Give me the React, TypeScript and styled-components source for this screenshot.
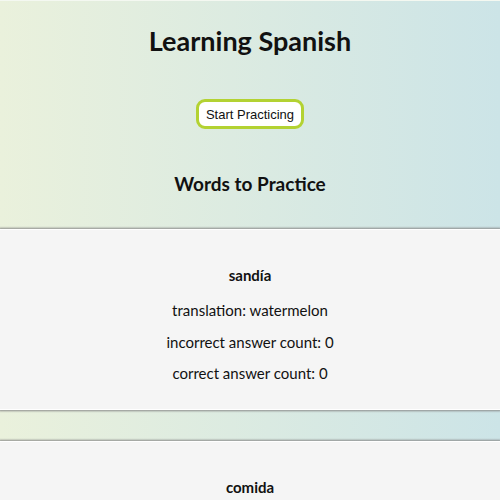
import styled, { createGlobalStyle } from "styled-components";

const GlobalStyle = createGlobalStyle`
  html, body {
    margin: 0;
    padding: 0;
  }
  body {
    font-family: Lato, "Noto Sans", sans-serif;
    color: #111;
    background: linear-gradient(to right, #eaf1dc, #cce4e7);
    background-attachment: fixed;
    min-height: 100vh;
  }
`

const Page = styled.div`
  display: flex;
  flex-direction: column;
  align-items: center;
  padding-top: 1px;
  border-top: 1px solid #f4f8f1;
`

const Title = styled.h1`
  font-size: 27px;
  font-weight: 700;
  line-height: 34px;
  margin: 22px 0 0;
`

const PracticeButton = styled.button`
  margin-top: 41px;
  height: 30px;
  padding: 0 7px;
  font-family: "Liberation Sans", Arial, sans-serif;
  font-size: 13px;
  color: #111;
  background: #fff;
  border: 3px solid #b3d232;
  border-radius: 9px;
  cursor: pointer;
`

const SectionTitle = styled.h2`
  font-size: 19px;
  font-weight: 700;
  line-height: 24px;
  margin: 43px 0 0;
`

const WordList = styled.div`
  display: flex;
  flex-direction: column;
  gap: 31px;
  width: 100%;
  margin-top: 33px;
`

const WordCard = styled.div`
  background: #f5f5f5;
  border-top: 1px solid #fff;
  border-bottom: 1px solid #fff;
  box-shadow: 0 0 2px 1px #8a8a8a;
  padding: 36px 0 13px;
  text-align: center;
`

const Word = styled.h3`
  font-size: 15px;
  font-weight: 700;
  line-height: 18px;
  margin: 0 0 17px;
`

const Detail = styled.p`
  font-size: 15px;
  line-height: 18px;
  margin: 0 0 13.5px;
`

const words = [
  { word: "sandía", translation: "watermelon", incorrect: 0, correct: 0 },
  { word: "comida", translation: "food", incorrect: 0, correct: 0 },
]

const App = () => {
  return (
    <>
      <GlobalStyle />
      <Page>
        <Title>Learning Spanish</Title>
        <PracticeButton>Start Practicing</PracticeButton>
        <SectionTitle>Words to Practice</SectionTitle>
        <WordList>
          {words.map((w) => (
            <WordCard key={w.word}>
              <Word>{w.word}</Word>
              <Detail>translation: {w.translation}</Detail>
              <Detail>incorrect answer count: {w.incorrect}</Detail>
              <Detail>correct answer count: {w.correct}</Detail>
            </WordCard>
          ))}
        </WordList>
      </Page>
    </>
  )
}

export default App
